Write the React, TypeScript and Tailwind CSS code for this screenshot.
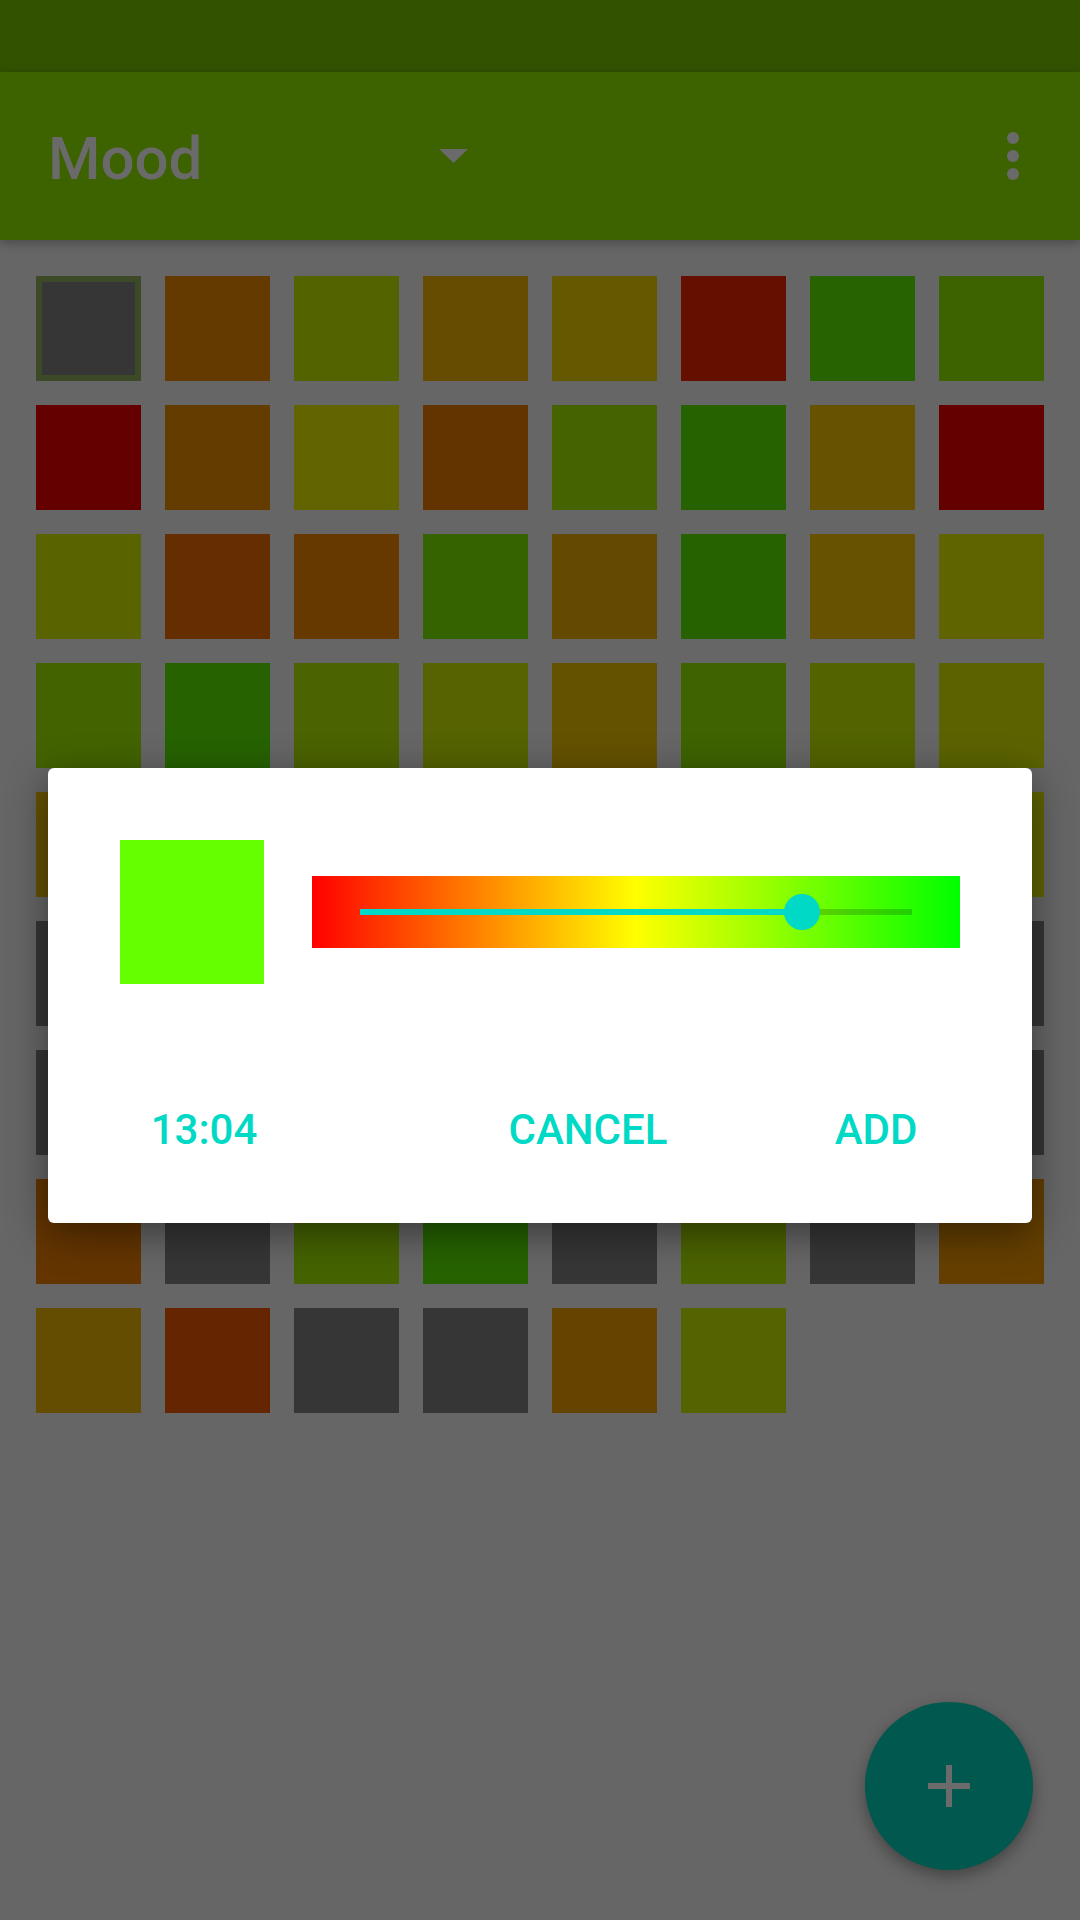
import React from "react";

const rows: string[][] = [
  ["sel", "#643a00", "#526300", "#654c00", "#645900", "#640f00", "#276300", "#3c6300"],
  ["#640000", "#643c00", "#626400", "#643400", "#456300", "#266300", "#665200", "#640000"],
  ["#596300", "#642e00", "#653900", "#356300", "#644a00", "#266300", "#665200", "#5f6400"],
  ["#436300", "#266300", "#4b6300", "#566300", "#645200", "#3e6300", "#526300", "#5b6300"],
  ["#665200", "#526300", "#363636", "#643a00", "#456300", "#645900", "#363636", "#606400"],
  ["#363636", "#363636", "#363636", "#363636", "#363636", "#363636", "#363636", "#363636"],
  ["#363636", "#363636", "#363636", "#363636", "#363636", "#363636", "#363636", "#363636"],
  ["#643500", "#363636", "#456300", "#266300", "#363636", "#4b6300", "#363636", "#643f00"],
  ["#644c00", "#642500", "#363636", "#363636", "#654400", "#556300"],
];

export default function App() {
  return (
    <div
      className="relative w-[1080px] h-[1920px] overflow-hidden bg-[#666666]"
      style={{ fontFamily: "Roboto, 'Noto Sans', sans-serif" }}
    >
      {/* status bar */}
      <div className="h-[72px] bg-[#325200]" />
      {/* toolbar */}
      <div className="relative z-10 h-[168px] bg-[#3d6200] flex items-center justify-between shadow-[0_3px_10px_rgba(0,0,0,0.28)]">
        <div className="ml-[48px] w-[420px] flex items-center justify-between">
          <span className="text-[60px] leading-none font-medium text-[#6a6a6a] pt-[6px]">Mood</span>
          <svg width="29" height="14" viewBox="0 0 29 14">
            <polygon points="0,0 29,0 14.5,14" fill="#6a6a6a" />
          </svg>
        </div>
        <div className="mr-[61px] flex flex-col gap-[6px]">
          <div className="w-[12px] h-[12px] rounded-full bg-[#6a6a6a]" />
          <div className="w-[12px] h-[12px] rounded-full bg-[#6a6a6a]" />
          <div className="w-[12px] h-[12px] rounded-full bg-[#6a6a6a]" />
        </div>
      </div>

      {/* grid */}
      <div className="px-[36px] pt-[36px] grid grid-cols-8 gap-[24px]">
        {rows.flat().map((c, i) =>
          c === "sel" ? (
            <div key={i} className="w-[105px] h-[105px] border-[6px] border-[#3c4a27] bg-[#363636]" />
          ) : (
            <div key={i} className="w-[105px] h-[105px]" style={{ backgroundColor: c }} />
          )
        )}
      </div>

      {/* dialog */}
      <div className="absolute left-[48px] top-[768px] w-[984px] h-[455px] bg-white rounded-[6px] shadow-[0_10px_40px_rgba(0,0,0,0.45)] flex flex-col">
        <div className="mt-[72px] px-[72px] flex items-center gap-[48px]">
          <div className="w-[144px] h-[144px] bg-[#66ff00] shrink-0" />
          <div className="flex-1 h-[72px] px-[48px] flex items-center bg-[linear-gradient(to_right,#ff0000,#ffff00_50%,#00ff00)]">
            <div className="relative w-full h-[6px] bg-black/[0.18]">
              <div className="absolute left-0 top-0 h-[6px] w-[80%] bg-[#00d9c5]" />
              <div className="absolute left-[80%] top-1/2 -translate-x-1/2 -translate-y-1/2 w-[36px] h-[36px] rounded-full bg-[#00d9c5]" />
            </div>
          </div>
        </div>
        <div className="mt-[125px] pl-[56px] flex items-start text-[42px] leading-none font-medium text-[#00d9c5]">
          <div className="w-[200px] text-center">13:04</div>
          <div className="w-[200px] text-center ml-[184px]">CANCEL</div>
          <div className="w-[200px] text-center ml-[88px]">ADD</div>
        </div>
      </div>

      {/* FAB */}
      <div className="absolute right-[47px] bottom-[50px] w-[168px] h-[168px] rounded-full bg-[#00584e] shadow-[0_6px_16px_rgba(0,0,0,0.35)] flex items-center justify-center">
        <svg width="42" height="42" viewBox="0 0 42 42">
          <rect x="18" y="0" width="6" height="42" fill="#6b6b6b" />
          <rect x="0" y="18" width="42" height="6" fill="#6b6b6b" />
        </svg>
      </div>
    </div>
  );
}
